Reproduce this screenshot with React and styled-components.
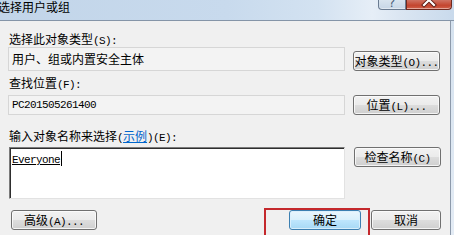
import React from 'react';
import styled, { createGlobalStyle } from 'styled-components';

const Global = createGlobalStyle`
  html, body { margin: 0; padding: 0; width: 454px; height: 235px; overflow: hidden; background: #f0f0f0; }
  body { font-family: "Noto Sans CJK SC", "Noto Sans", sans-serif; font-size: 12px; color: #000; }
`;

const Window = styled.div`
  width: 454px;
  height: 235px;
  display: flex;
  flex-direction: column;
  overflow: hidden;
  position: relative;
`;

const TitleBar = styled.div`
  height: 20px;
  flex: none;
  display: flex;
  align-items: flex-start;
  justify-content: space-between;
  background: linear-gradient(to right, #c2d5e9 0%, #c8daed 50%, #d3e2f1 70%, #e6eef7 82%, #dbe6f2 88%, #c9daec 100%);
  border-bottom: 1px solid #8595a8;
`;

const Title = styled.div`
  margin: 1px 0 0 -2px;
  font-size: 12px;
  line-height: 12px;
  white-space: nowrap;
`;

const Captions = styled.div`
  display: flex;
  margin-right: 2px;
`;

const CapBtn = styled.div`
  box-sizing: border-box;
  width: ${p => p.$w}px;
  height: 10px;
  overflow: hidden;
  display: flex;
  justify-content: center;
  align-items: flex-end;
  border: 1px solid ${p => (p.$close ? '#6f2a20' : '#6a7b91')};
  border-top: none;
  border-radius: ${p => (p.$close ? '0 0 4px 0' : '0 0 0 4px')};
  background: ${p =>
    p.$close
      ? 'linear-gradient(#cf7363, #c4452f 60%, #d0604a)'
      : 'linear-gradient(#d9e4ef, #c7d6e6)'};
  box-shadow: inset 0 -1px 0 rgba(255, 255, 255, 0.45);
`;

const HelpGlyph = styled.span`
  font-family: "DejaVu Sans", sans-serif;
  font-size: 12px;
  line-height: 12px;
  color: #4a5d78;
  margin-bottom: 0px;
`;

const Main = styled.div`
  flex: 1;
  display: flex;
  min-height: 0;
`;

const Body = styled.div`
  flex: 1;
  background: #f0f0f0;
  padding: 11px 9px 0 8px;
  display: flex;
  flex-direction: column;
`;

const RightFrame = styled.div`
  width: 4px;
  border-left: 1px solid #8d9aab;
  background: linear-gradient(#d5e2ef, #e4ecf5);
`;

const Label = styled.div`
  line-height: 14px;
  height: 14px;
  white-space: nowrap;
  margin-top: ${p => p.$mt || 0}px;
  margin-left: 1px;
`;

const Hw = styled.span`
  font-family: "Liberation Mono", monospace;
  font-size: 11px;
  letter-spacing: -0.6px;
`;

const Link = styled.span`
  color: #0066cc;
  text-decoration: underline;
`;

const Row = styled.div`
  display: flex;
  align-items: ${p => p.$align || 'flex-end'};
  gap: 8px;
  margin-top: ${p => p.$mt || 0}px;
`;

const ReadBox = styled.div`
  box-sizing: border-box;
  width: 337px;
  height: ${p => p.$h}px;
  border: 1px solid #d6d6d6;
  background: #f3f3f3;
  padding: ${p => p.$pt || 0}px 0 0 3px;
  display: flex;
  align-items: ${p => (p.$pt ? 'flex-start' : 'center')};
  line-height: 14px;
  white-space: nowrap;
`;

const MonoText = styled.span`
  font-family: "Liberation Mono", monospace;
  font-size: 11px;
  letter-spacing: -0.6px;
  line-height: 14px;
`;

const EditArea = styled.div`
  box-sizing: border-box;
  width: 336px;
  height: 52px;
  margin-left: 1px;
  background: #fff;
  border: 1px solid;
  border-color: #7a7a7a #e2e2e2 #e2e2e2 #7a7a7a;
  box-shadow: inset 1px 1px 0 #2e2e2e;
  padding: 3px 0 0 2px;
  line-height: 13px;
`;

const Resolved = styled.span`
  font-family: "Liberation Mono", monospace;
  font-size: 11px;
  letter-spacing: -0.6px;
  text-decoration: underline;
`;

const Caret = styled.span`
  display: inline-block;
  width: 1px;
  height: 15px;
  background: #000;
  vertical-align: -3px;
  margin-left: 1px;
`;

const Btn = styled.div`
  box-sizing: border-box;
  width: ${p => p.$w}px;
  height: 20px;
  line-height: 18px;
  text-align: center;
  white-space: nowrap;
  border: 1px solid ${p => (p.$default ? '#3c7fb1' : '#707070')};
  border-radius: 3px;
  background: ${p =>
    p.$default
      ? 'linear-gradient(#eaf6fd 0%, #d9f0fc 50%, #bee6fd 51%, #a7d9f5 100%)'
      : 'linear-gradient(#f2f2f2 0%, #ebebeb 50%, #dddddd 51%, #cfcfcf 100%)'};
  box-shadow: inset 0 0 0 1px ${p => (p.$default ? 'rgba(220,240,252,0.9)' : 'rgba(252,252,252,0.8)')};
  margin-left: ${p => p.$ml || 0}px;
`;

const Bottom = styled.div`
  display: flex;
  align-items: center;
  margin-top: 11px;
`;

const DefaultWrap = styled.div`
  position: relative;
  margin-left: auto;
  margin-right: 10px;
`;

const Highlight = styled.div`
  position: absolute;
  left: -25px;
  top: -2px;
  width: 106px;
  height: 30px;
  box-sizing: border-box;
  border: 2px solid #c4282c;
  pointer-events: none;
`;

export default function App() {
  return (
    <>
      <Global />
      <Window>
        <TitleBar>
          <Title>选择用户或组</Title>
          <Captions>
            <CapBtn $w={28}>
              <HelpGlyph>?</HelpGlyph>
            </CapBtn>
            <CapBtn $w={46} $close>
              <svg width="44" height="9" viewBox="0 0 44 9">
                <path d="M17 -5 L27 5 M27 -5 L17 5" stroke="#5a1a12" strokeWidth="4" strokeLinecap="square" />
                <path d="M17 -5 L27 5 M27 -5 L17 5" stroke="#ffffff" strokeWidth="2.2" strokeLinecap="square" />
              </svg>
            </CapBtn>
          </Captions>
        </TitleBar>
        <Main>
          <Body>
            <Label>
              选择此对象类型<Hw>(S):</Hw>
            </Label>
            <Row $mt={1}>
              <ReadBox $h={24} $pt={4}>用户、组或内置安全主体</ReadBox>
              <Btn $w={87}>
                对象类型<Hw>(O)...</Hw>
              </Btn>
            </Row>
            <Label $mt={5}>
              查找位置<Hw>(F):</Hw>
            </Label>
            <Row $mt={5}>
              <ReadBox $h={20}>
                <MonoText>PC201505261400</MonoText>
              </ReadBox>
              <Btn $w={87}>
                位置<Hw>(L)...</Hw>
              </Btn>
            </Row>
            <Label $mt={14}>
              输入对象名称来选择<Hw>(</Hw>
              <Link>示例</Link>
              <Hw>)(E):</Hw>
            </Label>
            <Row $mt={4} $align="flex-start">
              <EditArea>
                <Resolved>Everyone</Resolved>
                <Caret />
              </EditArea>
              <Btn $w={87} $ml={1}>
                检查名称<Hw>(C)</Hw>
              </Btn>
            </Row>
            <Bottom>
              <Btn $w={86} $ml={3}>
                高级<Hw>(A)...</Hw>
              </Btn>
              <DefaultWrap>
                <Btn $w={72} $default>
                  确定
                </Btn>
                <Highlight />
              </DefaultWrap>
              <Btn $w={70}>取消</Btn>
            </Bottom>
          </Body>
          <RightFrame />
        </Main>
      </Window>
    </>
  );
}
